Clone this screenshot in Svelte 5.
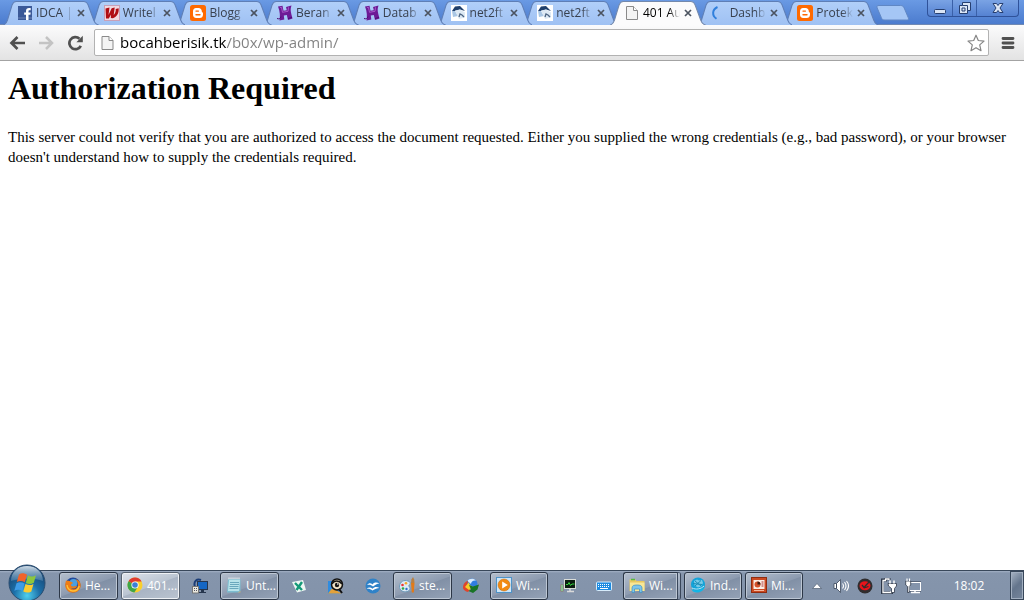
<script>
  const tabs = [
    { icon: 'facebook', title: 'IDCA |' },
    { icon: 'write', title: 'Writel' },
    { icon: 'blogger', title: 'Blogg' },
    { icon: 'host', title: 'Beran' },
    { icon: 'host', title: 'Datab' },
    { icon: 'net2ftp', title: 'net2ft' },
    { icon: 'net2ftp', title: 'net2ft' },
    { icon: 'page', title: '401 Au', active: true },
    { icon: 'spinner', title: 'Dashb' },
    { icon: 'blogger', title: 'Protek' }
  ];

  const pinned = [
    { icon: 'firefox', title: 'He...' },
    { icon: 'chrome', title: '401...', active: true },
    { icon: 'remote' },
    { icon: 'notepad', title: 'Unt...' },
    { icon: 'xmark' },
    { icon: 'viewer' },
    { icon: 'openoffice' },
    { icon: 'paint', title: 'ste...' }
  ];

  const running = [
    { icon: 'idm' },
    { icon: 'media', title: 'Wi...' },
    { icon: 'monitor' },
    { icon: 'keyboard' },
    { icon: 'explorer', title: 'Wi...', stacked: true },
    { icon: 'globe', title: 'Ind...' },
    { icon: 'powerpoint', title: 'Mi...' }
  ];

  const tray = ['arrow', 'speaker', 'shield', 'power', 'network'];
</script>

{#snippet glyph(name)}
  <svg class="glyph" viewBox="0 0 16 16" aria-hidden="true">
    {#if name === 'facebook'}
      <rect x="1" y="1" width="14" height="14" fill="#3b5998" />
      <rect x="1" y="12.5" width="14" height="1" fill="#6d84b4" />
      <path d="M9 15V9.7H7.2V7.4H9V6c0-1.9 1.1-3 3-3h1.700v2.200h-1.200c-.8 0-1 .4-1 1v1.200h2.200l-.3 2.300h-1.900V15z" fill="#fff" />
    {:else if name === 'write'}
      <rect x=".5" y=".5" width="15" height="15" fill="#f0d9e2" stroke="#c9a0b8" />
      <path d="M1.500 3.500l4-1-1 7.500 3.200-6.800 3-.6-1 7.400c1.500-1.500 2.300-3.600 2-6l2.900-.8c.8 5-2.400 9.300-5.800 10l-2-.3.2-3.400-2.200 4H2z" fill="#b00d14" />
    {:else if name === 'blogger'}
      <rect width="16" height="16" rx="2.500" fill="#ff6a00" />
      <path d="M6 3h2.500c2 0 3.300 1.300 3.300 3.200 0 1 .3 1.100 1.200 1.300v2.200c0 2-1.300 3.300-3.300 3.300H6.200C4.200 13 3 11.700 3 9.800V6.200C3 4.300 4.200 3 6 3z" fill="#fff" />
      <path d="M6 6.100h2.400M6 9.800h4" stroke="#ff6a00" stroke-width="1.400" stroke-linecap="round" />
    {:else if name === 'host'}
      <path d="M1 1.500l4.500-.8 1 5 3.300-.4-.8-3.300L14.500.5c-1.200 3-.9 5.500-.2 8.400l1.200 4.600-4.500 1.500-1.200-5-3 .5.5 4L2.500 15.500c.8-4 .6-9-1.500-14z" fill="#6d1a96" />
      <path d="M3 2.500l1.500-.2 1 5 5.500-1 .5-4" stroke="#a857c9" fill="none" />
      <path d="M0 13.500c2 .8 3.500 0 4-2M11 13.500l4-1" stroke="#4b0b72" fill="none" />
    {:else if name === 'net2ftp'}
      <rect width="16" height="16" fill="#fff" />
      <path d="M1 6l3-4.500L9 1l5 5-5-1.500L4 6z" fill="#1f3f6c" />
      <path d="M1 6l3 0 3 5-5 1z" fill="#a9c6e4" />
      <path d="M4 5.500l5-1 5 3v5l-6 1.500z" fill="#dde9f4" />
      <path d="M8 12l1-3 2 1 2 2" stroke="#4c6482" stroke-width="1.300" fill="none" />
    {:else if name === 'page'}
      <path d="M2.500 1.500h7l4 4v9h-11z" fill="#f4f4f4" stroke="#8a8a8a" />
      <path d="M9.500 1.500v4h4" fill="#fff" stroke="#8a8a8a" />
    {:else if name === 'spinner'}
      <path d="M6.500 2C1 4.500.8 10.500 5.500 13.800" fill="none" stroke="#2f7fdc" stroke-width="2" />
    {:else if name === 'firefox'}
      <circle cx="8" cy="8" r="7.500" fill="#234a9a" />
      <circle cx="8.500" cy="6" r="4" fill="#4c9fe0" />
      <path d="M1 3.500C2 4 3 3.500 4.500 4c1 .3 1.300 1 2.500 1.200 1 .2 1 .8.300 1.300C6 7.300 5.500 8 6.500 9c2 1.600 4-.5 5.500.2-1 2.500-4.500 3-6 1.500 2 3 7 1.500 7-3 0-2-.8-4-2.500-5.500C14 3 16 5.500 15.700 9c-.5 4-3.700 6.700-7.700 6.700C3.500 15.700.3 12.500.3 8.500.3 6.500.6 5 1 3.500z" fill="#ef7d14" />
      <path d="M2 8c.3 3.500 3 6 6 6s5.500-2 6.200-5" stroke="#ffc337" stroke-width="1.300" fill="none" />
    {:else if name === 'chrome'}
      <circle cx="8" cy="8" r="7.500" fill="#f9cf2d" />
      <path d="M8 8L1.500 4.200A7.500 7.500 0 0 1 14.600 4.500L8 4.500z" fill="#df3b30" />
      <path d="M8 8L1.500 4.200A7.500 7.500 0 0 0 7.300 15.500L11 9.800z" fill="#3fa648" />
      <circle cx="8" cy="8" r="3.600" fill="#fff" />
      <circle cx="8" cy="8" r="2.800" fill="#3b7fd6" />
    {:else if name === 'remote'}
      <path d="M3 9C1 3 5 .5 9 2" stroke="#1b3d77" stroke-width="2" fill="none" />
      <rect x="5.500" y="3.500" width="10" height="8" fill="#1466c4" stroke="#26364d" />
      <path d="M9 12h3v2h2v1H7v-1h2z" fill="#26364d" />
      <rect x=".5" y="8.500" width="6" height="6.500" fill="#eceadf" stroke="#777" />
      <path d="M2 10.500h3M2 12.500h3" stroke="#556" stroke-dasharray="1 1" />
    {:else if name === 'notepad'}
      <path d="M2 2h12.500v12L13 15.500H1z" fill="#7dbdd0" />
      <path d="M3 3h11l-1 11H2z" fill="#b8e3ea" />
      <path d="M4 5.500h9M4 7.500h9M3.500 9.500h9M3.500 11.500h9" stroke="#6aa8bd" />
      <path d="M3 .5v2M5 .5v2M7 .5v2M9 .5v2M11 .5v2M13 .5v2" stroke="#eef5f7" />
      <path d="M14.500 3v11l-3 1.500h3z" fill="#c8b27b" />
    {:else if name === 'xmark'}
      <path d="M1 4l11-2 3 10-9 2.500z" fill="#eef7f3" />
      <path d="M4 5l7 7M11 4L5.500 12" stroke="#149a78" stroke-width="2.400" />
    {:else if name === 'viewer'}
      <path d="M0 3h11v12.500H0z" fill="#2f8ce0" />
      <path d="M0 15.500l4-5 5 2 4 3z" fill="#e3a13a" />
      <ellipse cx="9" cy="6.500" rx="5.500" ry="5.500" fill="#eee2c6" stroke="#111" stroke-width="1.500" />
      <path d="M4 6c2-4 7-4 10 0" stroke="#111" stroke-width="1.500" fill="none" />
      <circle cx="9" cy="7" r="2.200" fill="#151515" />
      <path d="M11 11l3 4" stroke="#111" stroke-width="2" />
      <circle cx="9.800" cy="6" r=".8" fill="#fff" />
    {:else if name === 'openoffice'}
      <circle cx="8" cy="8" r="7.500" fill="#2f82c8" />
      <path d="M2 7c2-2.500 4-2 5.500-.5C9 4 12 4 14.500 5.500 12 5.500 10 7 8 8.500 6 6.500 4 6.500 2 7zM1.500 11c2-2 4-1.800 6-.3 2-2.200 4.500-2.200 7-.7-2.500 0-4.500 1-7 2.500-2-1.500-4-2-6-1.500z" fill="#fff" />
    {:else if name === 'paint'}
      <path d="M.5 9C1 4.500 5 2.500 9 4c3 1 2.500 3 1.200 4-1.200 1.200.8 2 .8 3.500C10.500 15 6 15.500 3 14 1 13 .3 11 .5 9z" fill="#dceaf4" stroke="#6d9ab9" />
      <circle cx="3.500" cy="8" r="1.300" fill="#e33" />
      <circle cx="7" cy="6.200" r="1.300" fill="#f5a623" />
      <circle cx="4" cy="11.500" r="1.300" fill="#2fa84a" />
      <circle cx="7.500" cy="12" r="1.200" fill="#2f6fd0" />
      <path d="M12 6h3.500l-.7 9.500h-2z" fill="#e27a18" />
      <path d="M12 6l.4-3.500L14 0l1.200 2.500.3 3.500z" fill="#b98042" />
    {:else if name === 'idm'}
      <circle cx="9" cy="6" r="5.500" fill="#2f7de0" />
      <path d="M4.500 3C6 0 11 0 13 2.500 10 2 8 4 8 6z" fill="#d7eafc" />
      <path d="M0 10c0-4 2-6.500 5-7-1 3-.5 6 3 7.500L5 14C2.500 13.500.5 12 0 10z" fill="#e0452b" />
      <path d="M2 9l4-5c0 3 2 4 4 4.500L6 12z" fill="#f6cf29" />
      <path d="M6 7l4 1.500L16 6.500l-1.500 5L10 15l-4.500-2 2.500-1.500z" fill="#187426" />
    {:else if name === 'media'}
      <rect x=".5" y=".5" width="15" height="15" fill="#cfe6f7" stroke="#4e93c8" />
      <circle cx="8" cy="8" r="6" fill="#f28a12" stroke="#c96a06" stroke-width=".5" />
      <path d="M6.200 4.500L11.800 8l-5.600 3.500z" fill="#fff" />
    {:else if name === 'monitor'}
      <rect x="4.500" y="1.500" width="11" height="9" fill="#0b1c10" stroke="#d8dcd8" />
      <path d="M6 6.500h2l1-2 1.500 3L12 6h2.500" stroke="#33d23c" fill="none" />
      <path d="M7 13.500h7M10 11v2" stroke="#dadada" stroke-width="1.500" />
      <path d="M.5 6.500h3v7h-3z" fill="#e2e2e2" stroke="#888" />
      <path d="M2 7v6" stroke="#2e9b39" />
    {:else if name === 'keyboard'}
      <rect x=".5" y="4" width="15" height="8.500" rx="1" fill="#1d8be0" stroke="#d7ecfb" />
      <path d="M2 6.500h12M2 8.500h12" stroke="#fff" stroke-dasharray="1 1" />
      <path d="M4 10.500h8" stroke="#fff" />
    {:else if name === 'explorer'}
      <path d="M.5 2.500h6l1 1.500h8v10H.5z" fill="#e8c860" />
      <path d="M2 2.500h4" stroke="#58b83c" stroke-width="1.500" />
      <path d="M1 5.500h14.500V14H1z" fill="#f8e796" />
      <path d="M3 15.500V11c0-2.500 2-3 5-3s5 .5 5 3v4.500h-2.500V12h-5v3.500z" fill="#7cc4ea" stroke="#3d8fc0" stroke-width=".7" />
    {:else if name === 'globe'}
      <circle cx="8" cy="7.500" r="7" fill="#13a3d8" />
      <path d="M4 4l3-1.500 2 1 3-.5 1 3-2 3.500-3 1-3.500-2z" fill="#78cbe8" />
      <path d="M5 4l6 5M11 3.500L5 9M3 6.500l9 1" stroke="#188db8" />
      <path d="M1 12c4 2.500 10 1.500 14-3-1 6-8 8-12 5.500z" fill="#12b5e6" />
      <path d="M2 11c4 2 9 1 12-2" stroke="#b9eafa" fill="none" />
    {:else if name === 'powerpoint'}
      <rect x=".5" y=".5" width="15" height="15" fill="#cb4a22" stroke="#8f2c10" />
      <rect x="2.500" y="3" width="11" height="9" fill="#fbeee5" />
      <circle cx="6.500" cy="7.500" r="3" fill="#d2512a" />
      <path d="M6.500 7.500V4.500a3 3 0 0 1 3 3z" fill="#3b1a10" />
      <path d="M10.500 5h2M10.500 7h2M10.500 9h2" stroke="#a33" />
      <path d="M3 13.500h10" stroke="#f3b79d" />
    {:else if name === 'arrow'}
      <path d="M3.500 10.500L8 5.500l4.500 5z" fill="#fff" stroke="#4d5b70" stroke-width=".7" />
    {:else if name === 'speaker'}
      <path d="M1 5.500h2.500l4-4v13l-4-4H1z" fill="#fff" stroke="#3a4659" stroke-width=".8" />
      <path d="M3.500 5.500v5" stroke="#3a4659" />
      <path d="M9.500 5.500q2 2.500 0 5M11.500 4q3 4 0 8M13.500 3q4 5 0 10" stroke="#fff" stroke-width="1.100" fill="none" />
    {:else if name === 'shield'}
      <circle cx="8" cy="8" r="7.500" fill="#302d2e" />
      <ellipse cx="8" cy="7.800" rx="5.500" ry="4.500" fill="#e8141b" />
      <path d="M5 7l2 2.500L12 4M7 10l4.500-1.500" stroke="#302d2e" stroke-width="1.300" fill="none" />
    {:else if name === 'power'}
      <path d="M8 2V.8H4.500V2h-3v13h9v-2" fill="none" stroke="#2d3748" stroke-width="3" />
      <path d="M8 2V1H4.500v1.500H2v12h8V13" fill="none" stroke="#fff" stroke-width="1.300" />
      <path d="M7 5.500h8.500V8l-2 2.500v4h-3v-4l-3-2.500z" fill="#fff" stroke="#2d3748" stroke-width=".8" />
      <path d="M9 2.500v3M13 2.500v3" stroke="#fff" stroke-width="1.500" />
    {:else if name === 'network'}
      <rect x="4.500" y="4.500" width="11" height="8" fill="#7c8ca3" stroke="#2d3748" stroke-width="2" />
      <rect x="4.500" y="4.500" width="11" height="8" fill="#8494ab" stroke="#fff" />
      <path d="M6 14.500h9M10 12v2" stroke="#fff" stroke-width="1.500" />
      <path d="M.7 3h5v4l-1.500 1.500v6H2.500v-6L.7 7z" fill="#fff" stroke="#2d3748" stroke-width=".8" />
      <path d="M2 .5V3M4.500.5V3" stroke="#fff" stroke-width="1.200" />
    {/if}
  </svg>
{/snippet}

{#snippet task(item)}
  <li class:wide={item.title}>
    {#if item.title}
      <button class="task" class:active={item.active} class:stacked={item.stacked}>
        {@render glyph(item.icon)}<span>{item.title}</span>
      </button>
    {:else}
      <button class="shortcut" aria-label={item.icon}>{@render glyph(item.icon)}</button>
    {/if}
  </li>
{/snippet}

<div class="desktop">
  <header class="titlebar">
    <ul class="tabs">
      {#each tabs as tab, i}
        <li class="tab" class:active={tab.active} style:z-index={tab.active ? 20 : 10 - i}>
          <svg class="shape" viewBox="0 0 95 25" preserveAspectRatio="none" aria-hidden="true">
            <path
              d="M0 25C2.500 24.500 3.500 23 4.500 20L9 5C10 2.500 11 1.500 13 1.500H80C82.500 1.500 83.500 2.500 84.500 5L90 20C91 23 92 24.500 95 25"
              fill={tab.active ? '#fbfbfc' : 'url(#tab-fill)'}
              stroke={tab.active ? '#7489ac' : '#5f7fb6'}
            />
          </svg>
          <button class="tab-title">{@render glyph(tab.icon)}<span>{tab.title}</span></button>
          <button class="close" aria-label="Close tab">
            <svg viewBox="0 0 8 8"><path d="M1 1l6 6M7 1L1 7" stroke="#4b5360" stroke-width="1.700" /></svg>
          </button>
        </li>
      {/each}
    </ul>
    <button class="new-tab" aria-label="New tab">
      <svg viewBox="0 0 34 16">
        <defs>
          <linearGradient id="tab-fill" x1="0" y1="0" x2="0" y2="1">
            <stop offset="0" stop-color="#b1cff9" />
            <stop offset="1" stop-color="#9fc1f3" />
          </linearGradient>
        </defs>
        <path d="M3 .5h21.500c2 0 3 .8 3.700 2.500l4 9.500c.7 2 .2 2.500-1.500 2.500H9C7 15 6 14.500 5.300 12.500L1.200 3C.5 1.300 1 .5 3 .5z" fill="#a5c6f5" stroke="#6087c4" />
      </svg>
    </button>
    <div class="window-controls">
      <button aria-label="Minimize">
        <svg viewBox="0 0 14 14"><rect x="1.500" y="8.500" width="11" height="4" rx="1" fill="#dbe5f5" stroke="#263f70" /></svg>
      </button>
      <button aria-label="Restore">
        <svg viewBox="0 0 14 14">
          <path d="M4.500 1.500h8v8h-3v3h-8v-8h3z" fill="#dbe5f5" stroke="#263f70" />
          <path d="M4.500 4.500h5v5M4 7h3v3H4z" fill="none" stroke="#263f70" />
        </svg>
      </button>
      <button class="wide" aria-label="Close">
        <svg viewBox="0 0 14 14">
          <path d="M2 2.500h3.500L7 4.500l1.500-2H12L9 7l3 4.500H8.500L7 9.500l-1.500 2H2L5 7z" fill="#dbe5f5" stroke="#263f70" />
        </svg>
      </button>
    </div>
  </header>

  <nav class="toolbar" aria-label="Browser">
    <button aria-label="Back">
      <svg viewBox="0 0 17 16"><path d="M8.500 2l-6 6 6 6M3 8H16" fill="none" stroke="#505050" stroke-width="2.700" /></svg>
    </button>
    <button aria-label="Forward">
      <svg viewBox="0 0 17 16"><path d="M8 2l6 6-6 6M13.500 8H1" fill="none" stroke="#c3c3c3" stroke-width="2.500" /></svg>
    </button>
    <button aria-label="Reload">
      <svg viewBox="0 0 17 16">
        <path d="M13.800 10.800A6 6 0 1 1 12.500 3.800" fill="none" stroke="#505050" stroke-width="2.700" />
        <path d="M15.800.8v6.400H9.400z" fill="#505050" />
      </svg>
    </button>
    <div class="omnibox">
      {@render glyph('page')}
      <input class="address" type="text" aria-label="Address" value="bocahberisik.tk/b0x/wp-admin/" />
      <button class="star" aria-label="Bookmark this page">
        <svg viewBox="0 0 18 18">
          <path d="M9 1.200l2.300 5.300 5.700.6-4.300 3.800 1.300 5.800L9 13.700l-5 3 1.300-5.800L1 7.100l5.700-.6z" fill="#fff" stroke="#858585" stroke-width="1.200" stroke-linejoin="round" />
        </svg>
      </button>
    </div>
    <button class="menu" aria-label="Menu">
      <svg viewBox="0 0 14 14"><path d="M2 2.500h10M2 7h10M2 11.500h10" stroke="#505050" stroke-width="2.800" stroke-linecap="round" /></svg>
    </button>
  </nav>

  <main>
    <h1>Authorization Required</h1>
    <p>
      This server could not verify that you are authorized to access the document requested. Either you supplied the
      wrong credentials (e.g., bad password), or your browser doesn't understand how to supply the credentials required.
    </p>
  </main>

  <footer class="taskbar">
    <button class="start" aria-label="Start">
      <svg viewBox="0 0 38 36">
        <defs>
          <radialGradient id="orb" cx=".5" cy=".85" r=".8">
            <stop offset="0" stop-color="#4fd0ee" />
            <stop offset=".45" stop-color="#1c6fa8" />
            <stop offset="1" stop-color="#17406c" />
          </radialGradient>
          <linearGradient id="gloss" x1="0" y1="0" x2="0" y2="1">
            <stop offset="0" stop-color="#e4eef5" stop-opacity=".9" />
            <stop offset="1" stop-color="#8fb4cf" stop-opacity=".3" />
          </linearGradient>
        </defs>
        <circle cx="19" cy="19" r="18" fill="url(#orb)" stroke="#2b4d70" />
        <path d="M3 17C3 8 10 2 19 2s16 6 16 15c-8-3-22-3-32 0z" fill="url(#gloss)" />
        <path d="M11 10.500c2.500-1.800 5.500-1.500 8 .3l-2.200 7.500c-2.500-1.700-5.200-1.800-8-.3z" fill="#f0632a" />
        <path d="M20 11.300c2.500 1.600 5.300 1.600 8-.1l-2.200 7.600c-2.600 1.600-5.300 1.600-8 .1z" fill="#8cc63e" />
        <path d="M8.500 19.200c2.700-1.500 5.500-1.300 8 .2l-2.200 7.500c-2.500-1.600-5.200-1.700-8-.2z" fill="#3f9be6" />
        <path d="M17.500 20c2.600 1.500 5.300 1.500 8-.1l-2.200 7.500c-2.600 1.600-5.300 1.600-8 .1z" fill="#fccb2f" />
      </svg>
    </button>
    <ul class="tasks roomy">
      {#each pinned as item}{@render task(item)}{/each}
    </ul>
    <ul class="tasks">
      {#each running as item}{@render task(item)}{/each}
    </ul>
    <div class="tray">
      {#each tray as name}
        <button class="shortcut" aria-label={name}>{@render glyph(name)}</button>
      {/each}
    </div>
    <time>18:02</time>
    <button class="show-desktop" aria-label="Show desktop"></button>
  </footer>
</div>

<style>
  :global(body) {
    margin: 0;
    background: #fff;
  }

  .desktop {
    display: flex;
    flex-direction: column;
    min-height: 100vh;
    font-family: 'Open Sans', 'Noto Sans', sans-serif;
    font-size: 12px;
  }

  button {
    display: flex;
    align-items: center;
    justify-content: center;
    margin: 0;
    padding: 0;
    border: 0;
    background: none;
    font: inherit;
    color: inherit;
  }

  ul {
    margin: 0;
    padding: 0;
    list-style: none;
  }

  svg {
    display: block;
    flex: none;
  }

  .glyph {
    width: 16px;
    height: 16px;
  }

  .titlebar {
    display: flex;
    align-items: flex-start;
    height: 25px;
    padding: 0 5px 0 3px;
    background: linear-gradient(#6a9ae4, #4a7acd);
    box-shadow: inset 0 -1px #7089b3;
  }

  .tabs {
    display: flex;
    flex: 1;
    min-width: 0;
    isolation: isolate;
  }

  .tab {
    position: relative;
    display: flex;
    flex: 1 1 0;
    align-items: center;
    min-width: 0;
    height: 25px;
    padding: 0 5px 0 14px;
    box-sizing: border-box;
    color: #38404e;
  }

  .tab.active {
    color: #000;
  }

  .shape {
    position: absolute;
    inset: 0;
    width: calc(100% + 9px);
    height: 25px;
  }

  .tab-title {
    position: relative;
    flex: 1;
    justify-content: flex-start;
    gap: 3px;
    min-width: 0;
    line-height: 16px;
  }

  .tab-title span {
    flex: 1;
    overflow: hidden;
    text-align: left;
    white-space: nowrap;
    mask-image: linear-gradient(to right, #000 70%, transparent);
  }

  .close {
    position: relative;
    width: 8px;
    margin-left: 4px;
  }

  .close svg {
    width: 8px;
    height: 8px;
  }

  .new-tab {
    margin: 5px 17px 0 6px;
  }

  .new-tab svg {
    width: 34px;
    height: 16px;
  }

  .window-controls {
    display: flex;
    border: 1px solid #2f529a;
    border-top: 0;
    border-radius: 0 0 4px 4px;
    background: linear-gradient(#7aa3e4, #5582d2);
  }

  .window-controls button {
    width: 24px;
    height: 16px;
  }

  .window-controls button + button {
    border-left: 1px solid #3a60a8;
  }

  .window-controls .wide {
    width: 42px;
  }

  .window-controls svg {
    width: 14px;
    height: 14px;
  }

  .toolbar {
    display: flex;
    align-items: center;
    gap: 12px;
    padding: 4px 9px;
    border-bottom: 1px solid #a3a3a3;
    background: linear-gradient(#fbfbfc, #e3e3e3);
  }

  .toolbar svg {
    width: 17px;
    height: 16px;
  }

  .omnibox {
    display: flex;
    flex: 1;
    align-items: center;
    gap: 4px;
    height: 25px;
    padding: 0 3px 0 4px;
    margin-left: -2px;
    border: 1px solid #b2b2b2;
    border-radius: 2px;
    background: #fff;
  }

  .omnibox .star svg {
    width: 18px;
    height: 18px;
  }

  .address {
    flex: 1;
    min-width: 0;
    height: 24px;
    margin: 0;
    padding: 0 0 2px;
    border: 0;
    outline: 0;
    font-family: inherit;
    font-size: 15px;
    color: transparent;
    background: linear-gradient(to right, #000 106px, #808080 106px);
    background-clip: text;
    caret-color: #000;
  }

  .toolbar .menu svg {
    width: 14px;
    height: 14px;
  }

  main {
    flex: 1;
    padding: 8px;
    font-family: 'Liberation Serif', serif;
    color: #000;
  }

  h1 {
    margin: 0 0 20px;
    font-size: 32px;
    line-height: 38px;
  }

  p {
    margin: 0;
    font-size: 15px;
    line-height: 20px;
  }

  .taskbar {
    display: flex;
    align-items: center;
    height: 29px;
    border-top: 1px solid #39485b;
    background: linear-gradient(#a3b1c5, #8595ac 2px, #8393aa);
    color: #fff;
  }

  .start {
    align-self: flex-end;
    margin: 0 13px 0 8px;
  }

  .start svg {
    width: 38px;
    height: 36px;
  }

  .tasks {
    display: flex;
    gap: 3px;
    --task: 58px;
    --shortcut: 33px;
  }

  .tasks.roomy {
    margin-right: 2px;
    --task: 59px;
    --shortcut: 34px;
  }

  .tasks li {
    width: var(--shortcut);
  }

  .tasks li.wide {
    width: var(--task);
  }

  .task,
  .shortcut {
    width: 100%;
    height: 28px;
  }

  .task {
    justify-content: flex-start;
    gap: 4px;
    padding: 0 0 1px 5px;
    box-sizing: border-box;
    border: 1px solid #2c3747;
    border-radius: 3px;
    background: linear-gradient(160deg, #b4bfce, #8d9bb0 50%, #8190a6 52%, #94a2b6);
    box-shadow: inset 0 0 0 1px #bcc6d3;
  }

  .task.active {
    border-color: #56616f;
    background: linear-gradient(160deg, #dfe4ec, #bac4d1 50%, #a9b4c4 52%, #bac4d0);
    box-shadow: inset 0 0 0 1px #eef1f5;
  }

  .task.stacked {
    border-right: 4px double #39465a;
  }

  .tray {
    display: flex;
    margin-left: auto;
  }

  .tray .shortcut {
    width: 24px;
  }

  time {
    width: 85px;
    padding-left: 3px;
    box-sizing: border-box;
    text-align: center;
  }

  .show-desktop {
    width: 14px;
    height: 29px;
    border: 1px solid #38475a;
    background: linear-gradient(135deg, #a9b5c5, #64758c 50%, #76869c);
    box-shadow: inset 0 0 0 1px #a2afc0;
  }
</style>
